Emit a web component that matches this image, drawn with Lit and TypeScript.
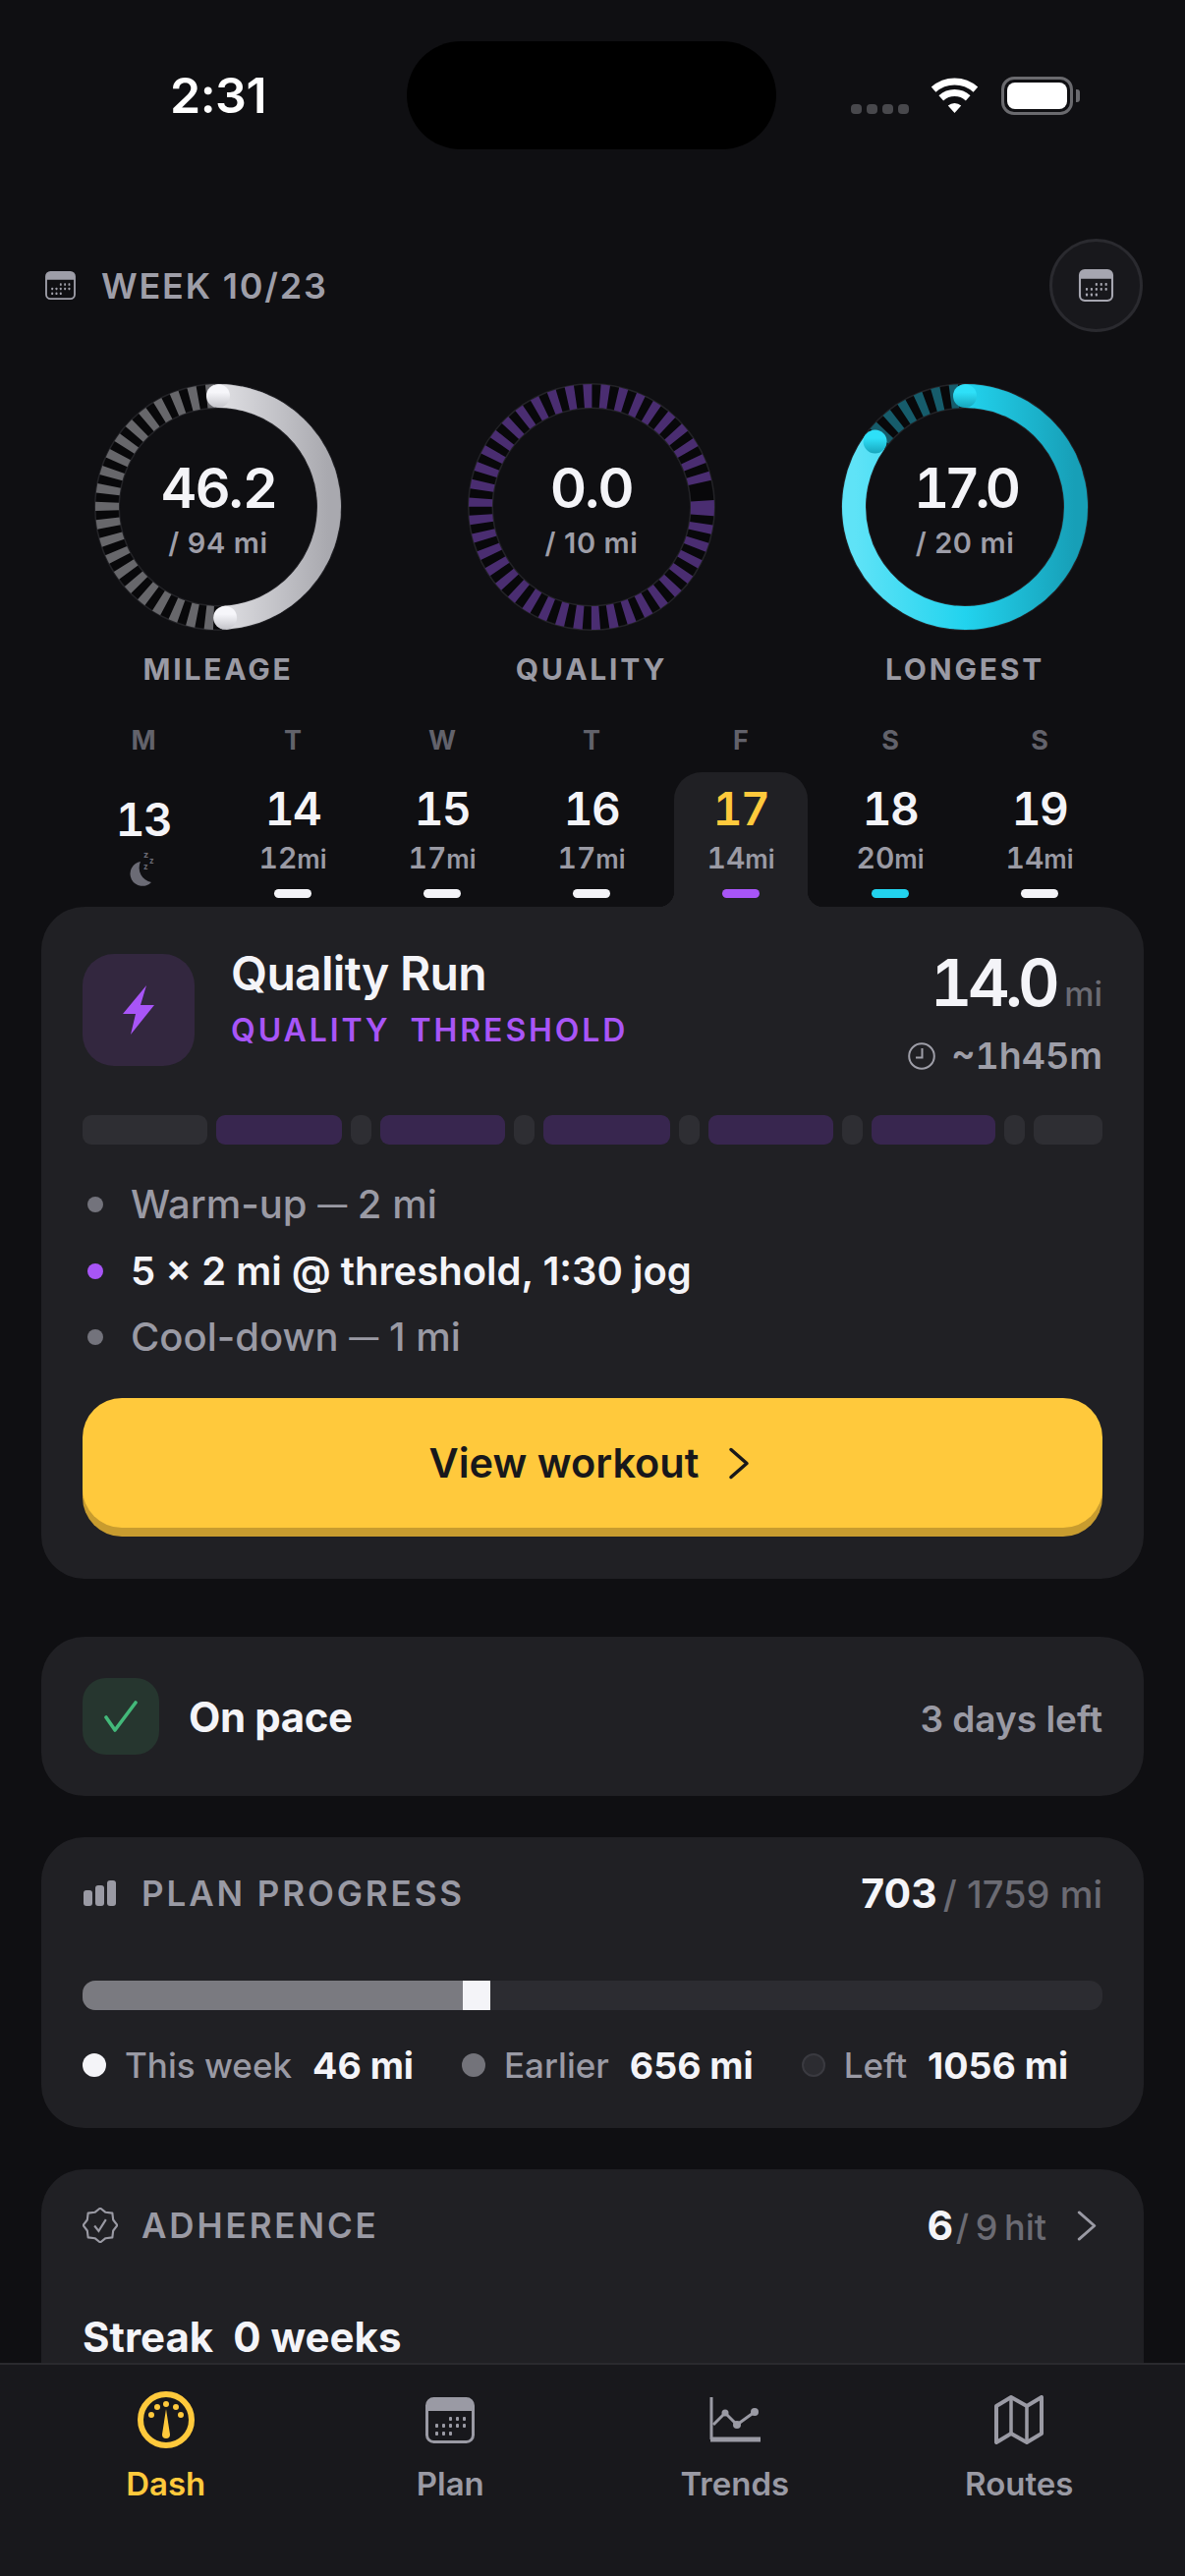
import { LitElement, html, css, svg } from "lit";
import { customElement } from "lit/decorators.js";

const calendar = (w: number, h: number) => html`<svg width=${w} height=${h} viewBox="0 0 50 47" fill="none">
  <rect x="1.5" y="1.5" width="47" height="44" rx="7" stroke="currentColor" stroke-width="3"/>
  <path d="M1.5 14V8.5a7 7 0 0 1 7-7h33a7 7 0 0 1 7 7V14Z" fill="currentColor"/>
  ${[[24, 20], [31, 20], [38, 20], [10, 27], [17, 27], [24, 27], [31, 27], [38, 27], [10, 35], [17, 35], [24, 35]].map(
    ([x, y]) => svg`<rect x=${x} y=${y} width="3" height="4" rx="1" fill="currentColor"/>`
  )}
</svg>`;

const chevron = (w: number, h: number, sw: number) => html`<svg width=${w} height=${h} viewBox="0 0 22 32" fill="none">
  <path d="M3 2L19 16L3 30" stroke="currentColor" stroke-width=${sw} stroke-linecap="round" stroke-linejoin="round"/>
</svg>`;

const sealPoints = () => {
  const pts: string[] = [];
  for (let i = 0; i < 16; i++) {
    const a = (i / 16) * Math.PI * 2 - Math.PI / 2;
    const r = i % 2 === 0 ? 16.5 : 13.5;
    pts.push(`${(17 + r * Math.cos(a)).toFixed(2)},${(17 + r * Math.sin(a)).toFixed(2)}`);
  }
  return pts.join(" ");
};

interface Ring { value: string; sub: string; label: string; frac: number; base: string; light: string; dark: string; tick: string; shift: number; capTop: string; capBot: string; }

const R = 113;
const TICKS = Array(41).fill("8.5 8.4").join(" ") + " 0 10 7 0";

const rings: Ring[] = [
  { value: "46.2", sub: "/ 94 mi", label: "MILEAGE", frac: 0.49, base: "#e0e0e4", light: "#f4f4f8", dark: "#a9a9af", tick: "#67676b", shift: 13, capTop: "#f6f6fa", capBot: "#c4c4ca" },
  { value: "0.0", sub: "/ 10 mi", label: "QUALITY", frac: 0, base: "#a855f7", light: "#a855f7", dark: "#a855f7", tick: "#4a2d71", shift: 0, capTop: "#a855f7", capBot: "#a855f7" },
  { value: "17.0", sub: "/ 20 mi", label: "LONGEST", frac: 0.85, base: "#22d3ee", light: "#5fe3f7", dark: "#179fb7", tick: "#165c6b", shift: 10, capTop: "#2ee0f8", capBot: "#17a5bc" },
];

const days = [
  { d: "M", n: "13", rest: true },
  { d: "T", n: "14", mi: "12", bar: "#f4f4f8" },
  { d: "W", n: "15", mi: "17", bar: "#f4f4f8" },
  { d: "T", n: "16", mi: "17", bar: "#f4f4f8" },
  { d: "F", n: "17", mi: "14", bar: "#a855f7", active: true },
  { d: "S", n: "18", mi: "20", bar: "#22d3ee" },
  { d: "S", n: "19", mi: "14", bar: "#f4f4f8" },
];

const segments = [
  { w: 127, q: false }, { w: 128, q: true }, { w: 21, q: false }, { w: 127, q: true }, { w: 21, q: false },
  { w: 128, q: true }, { w: 21, q: false }, { w: 127, q: true }, { w: 21, q: false }, { w: 126, q: true },
  { w: 21, q: false }, { w: 70, q: false },
];

@customElement("app-root")
export class AppRoot extends LitElement {
  static styles = css`
    :host { display: block; position: relative; width: 1206px; height: 2622px; overflow: hidden; background: #0f0f12; color: #f4f4f8; font-family: Inter, "Noto Sans", sans-serif; }
    svg { display: block; }
    .status { position: relative; height: 194px; display: flex; align-items: center; justify-content: space-between; padding: 0 114px 0 173px; }
    .time { font-size: 50px; line-height: 60px; font-weight: 600; letter-spacing: -0.5px; color: #fff; }
    .island { position: absolute; left: 414px; top: 42px; width: 376px; height: 110px; border-radius: 55px; background: #000; }
    .sys { display: flex; align-items: center; gap: 22px; }
    .dots { display: flex; gap: 5px; align-self: flex-end; padding-bottom: 1px; margin-right: -1px; }
    .dots i { width: 11px; height: 10px; border-radius: 4px; background: #48484c; }
    .batt { position: relative; width: 73px; height: 39px; box-sizing: border-box; border: 3px solid #6a6a6e; border-radius: 13px; padding: 3px; }
    .batt i { display: block; height: 100%; border-radius: 8px; background: #fff; }
    .batt b { position: absolute; right: -10px; top: 10px; width: 4px; height: 13px; border-radius: 0 3px 3px 0; background: #6a6a6e; }
    .hdr { margin-top: 49px; height: 95px; padding: 0 43px 0 46px; display: flex; align-items: center; justify-content: space-between; }
    .wk { display: flex; align-items: center; gap: 26px; font-size: 36px; line-height: 44px; font-weight: 600; letter-spacing: 1.8px; color: #9e9ea8; }
    .round { width: 95px; height: 95px; box-sizing: border-box; border-radius: 50%; background: #18181c; border: 3px solid #2a2a2f; display: flex; align-items: center; justify-content: center; color: #a6a6b0; }
    .rings { margin-top: 50px; padding-left: 94px; display: flex; gap: 124px; }
    .ring { width: 256px; display: flex; flex-direction: column; align-items: center; }
    .dial { position: relative; width: 256px; height: 256px; }
    .mid { position: absolute; inset: 0; display: flex; flex-direction: column; align-items: center; }
    .val { margin-top: 75px; font-size: 56px; line-height: 68px; font-weight: 600; letter-spacing: -1.6px; }
    .val.tn { font-variant-numeric: tabular-nums; letter-spacing: -4.9px; }
    .sub { margin-top: 4px; font-size: 29px; line-height: 36px; font-weight: 600; letter-spacing: 0.6px; color: #9e9ea8; }
    .rlabel { margin-top: 19px; font-size: 30px; line-height: 36px; font-weight: 700; letter-spacing: 2.8px; color: #9a9aa4; }
    .wd { margin-top: 39px; padding: 0 80px 0 78px; display: grid; grid-template-columns: repeat(7, 136px); column-gap: 16px; text-align: center; font-size: 27px; line-height: 32px; font-weight: 700; color: #62626b; }
    .daysr { margin-top: 16px; padding: 0 80px 0 78px; display: grid; grid-template-columns: repeat(7, 136px); column-gap: 16px; }
    .day { position: relative; height: 137px; box-sizing: border-box; padding-top: 14px; display: flex; flex-direction: column; align-items: center; border-radius: 28px 28px 0 0; }
    .day.rest { padding-top: 25px; }
    .day.on { background: #202024; }
    .day.on::before, .day.on::after { content: ""; position: absolute; bottom: 0; width: 16px; height: 16px; }
    .day.on::before { left: -16px; background: radial-gradient(circle at 0 0, transparent 16px, #202024 16.5px); }
    .day.on::after { right: -16px; background: radial-gradient(circle at 100% 0, transparent 16px, #202024 16.5px); }
    .num { font-size: 46px; line-height: 46px; font-weight: 600; color: #f4f4f8; letter-spacing: -1.5px; font-variant-numeric: tabular-nums; }
    .on .num { color: #ffc93c; }
    .mi { margin-top: 9px; font-size: 30px; line-height: 36px; font-weight: 600; color: #9a9aa4; font-variant-numeric: tabular-nums; }
    .mi small { font-size: 26px; font-weight: 600; }
    .bar { margin-top: 12px; width: 38px; height: 9px; border-radius: 4.5px; }
    .moon { margin-top: 5px; color: #6b6b75; }
    .card { margin: 0 42px; box-sizing: border-box; background: #202024; border-radius: 44px; padding: 0 42px; }
    .today { padding-top: 48px; padding-bottom: 52px; }
    .thead { display: flex; height: 114px; }
    .ticon { width: 114px; height: 114px; border-radius: 32px; background: #33273f; display: flex; align-items: center; justify-content: center; }
    .ttext { margin-left: 37px; flex: 1; }
    .ttitle { font-size: 48px; line-height: 56px; font-weight: 600; letter-spacing: -0.7px; color: #f4f4f8; margin-top: -8px; }
    .ttags { margin-top: 10px; display: flex; gap: 20px; font-size: 32px; line-height: 40px; font-weight: 600; letter-spacing: 2.9px; color: #a855f7; }
    .tright { display: flex; flex-direction: column; align-items: flex-end; }
    .dist { display: flex; align-items: baseline; gap: 9px; font-size: 66px; line-height: 70px; font-weight: 600; letter-spacing: -4.6px; margin-top: -6px; font-variant-numeric: tabular-nums; }
    .dist small { font-size: 34px; font-weight: 500; letter-spacing: 0; color: #6b6b73; }
    .dur { margin-top: 6px; display: flex; align-items: center; gap: 16px; font-size: 37.5px; line-height: 44px; font-weight: 600; color: #9e9ea8; font-variant-numeric: tabular-nums; }
    .segs { margin-top: 50px; display: flex; gap: 9px; }
    .seg { height: 30px; border-radius: 9px; background: #2e2e33; flex-shrink: 1; min-width: 0; }
    .seg.q { background: #38264f; }
    .steps { margin-top: 39px; display: flex; flex-direction: column; gap: 23.5px; }
    .step { display: flex; align-items: center; gap: 28px; padding-left: 5px; font-size: 40px; line-height: 44px; font-weight: 500; color: #9a9aa4; }
    .step i { width: 16px; height: 16px; border-radius: 50%; background: #73737c; }
    .step.main { color: #f4f4f8; font-weight: 600; }
    .step.main i { background: #a855f7; }
    .dash { font-size: 30px; vertical-align: 3px; }
    .cta { margin-top: 40px; height: 132px; box-sizing: border-box; padding-right: 6px; border-radius: 40px; background: #ffc93c; box-shadow: 0 9px 0 #c89c2f; display: flex; align-items: center; justify-content: center; gap: 30px; font-size: 41.5px; font-weight: 600; color: #18181b; }
    .pace { margin-top: 59px; height: 162px; display: flex; align-items: center; }
    .ok { width: 78px; height: 78px; border-radius: 24px; background: #26362f; display: flex; align-items: center; justify-content: center; }
    .paceT { margin-left: 30px; flex: 1; font-size: 42px; font-weight: 700; letter-spacing: -0.4px; }
    .paceR { font-size: 37px; font-weight: 600; color: #9a9aa4; padding-top: 5px; }
    .plan { margin-top: 42px; padding-top: 34px; padding-bottom: 42px; }
    .phead { height: 46px; display: flex; align-items: center; color: #9a9aa4; }
    .ptitle { margin-left: 24px; flex: 1; font-size: 35px; font-weight: 600; letter-spacing: 2.9px; white-space: nowrap; }
    .pval { font-size: 38px; font-weight: 500; color: #6b6b73; white-space: nowrap; }
    .pval.hit { font-size: 36px; word-spacing: -3px; }
    .pval b { font-size: 41px; font-weight: 700; color: #f4f4f8; margin-right: -4px; }
    .pbar { margin-top: 66px; height: 30px; border-radius: 13px; background: #2c2c31; display: flex; overflow: hidden; }
    .pbar i { display: block; height: 100%; }
    .legend { margin-top: 34px; height: 44px; display: flex; align-items: center; font-size: 35px; font-weight: 500; color: #9a9aa4; white-space: nowrap; }
    .lg { display: flex; align-items: center; margin-right: 49px; flex-shrink: 0; }
    .lg i { width: 24px; height: 24px; box-sizing: border-box; border-radius: 50%; margin-right: 19px; }
    .lg b { margin-left: 21px; font-size: 37.5px; font-weight: 700; color: #f4f4f8; }
    .adh { margin-top: 42px; padding-top: 34px; height: 400px; }
    .streak { margin-top: 66px; font-size: 42px; line-height: 50px; font-weight: 700; color: #f4f4f8; }
    .streak span { margin-left: 20px; }
    .tabs { position: absolute; left: 0; right: 0; top: 2405px; bottom: 0; box-sizing: border-box; border-top: 2px solid #2a2a2e; background: #18181c; padding: 24px 24px 0; display: grid; grid-template-columns: repeat(4, 1fr); }
    .tab { display: flex; flex-direction: column; align-items: center; font-size: 33px; font-weight: 600; color: #9a9aa4; }
    .tab.on { color: #ffc93c; }
    .tabi { height: 64px; display: flex; align-items: center; justify-content: center; }
    .tab span { margin-top: 13px; line-height: 40px; }
  `;

  private renderRing(r: Ring, i: number) {
    const c = 128;
    const a = r.frac * Math.PI * 2 - Math.PI / 2;
    const ex = c + R * Math.cos(a);
    const ey = c + R * Math.sin(a);
    return html`<div class="ring">
      <div class="dial">
        <svg width="256" height="256" viewBox="0 0 256 256" fill="none">
          <defs>
            <linearGradient id="g${i}" gradientUnits="userSpaceOnUse" x1="16" y1="128" x2="240" y2="128">
              <stop offset="0" stop-color=${r.light}/><stop offset="0.5" stop-color=${r.base}/><stop offset="1" stop-color=${r.dark}/>
            </linearGradient>
            <linearGradient id="c${i}" x1="0" y1="0" x2="0" y2="1">
              <stop offset="0.35" stop-color=${r.capTop}/><stop offset="1" stop-color=${r.capBot}/>
            </linearGradient>
          </defs>
          <circle cx=${c} cy=${c} r=${R} stroke="#232327" stroke-width="26"/>
          <circle cx=${c} cy=${c} r=${R} stroke="#08080a" stroke-width="23"/>
          <circle cx=${c} cy=${c} r=${R} stroke=${r.tick} stroke-width="24" stroke-dasharray=${TICKS} stroke-dashoffset=${-r.shift}/>
          ${r.frac > 0
            ? svg`<path d="M${c} ${c - R}A${R} ${R} 0 ${r.frac > 0.5 ? 1 : 0} 1 ${ex} ${ey}" stroke="url(#g${i})" stroke-width="24"/>
                 <circle cx=${c} cy=${c - R} r="12" fill="url(#c${i})"/>
                 <circle cx=${ex} cy=${ey} r="12" fill="url(#c${i})"/>`
            : ""}
        </svg>
        <div class="mid"><div class="val ${r.value.startsWith("1") ? "tn" : ""}">${r.value}</div><div class="sub">${r.sub}</div></div>
      </div>
      <div class="rlabel">${r.label}</div>
    </div>`;
  }

  render() {
    return html`
      <div class="status">
        <div class="time">2:31</div>
        <div class="island"></div>
        <div class="sys">
          <div class="dots"><i></i><i></i><i></i><i></i></div>
          <svg width="51" height="37" viewBox="0 0 51 37" fill="none">
            <path d="M4.1 12.2A32 32 0 0 1 46.9 12.2" stroke="#fff" stroke-width="7"/>
            <path d="M11.8 20.8A20.5 20.5 0 0 1 39.2 20.8" stroke="#fff" stroke-width="7"/>
            <path d="M25.5 36L18.8 28.6A10 10 0 0 1 32.2 28.6Z" fill="#fff"/>
          </svg>
          <div class="batt"><i></i><b></b></div>
        </div>
      </div>

      <div class="hdr">
        <div class="wk">${calendar(31, 29)}<span>WEEK 10/23</span></div>
        <div class="round">${calendar(37, 33)}</div>
      </div>

      <div class="rings">${rings.map((r, i) => this.renderRing(r, i))}</div>

      <div class="wd">${days.map((d) => html`<div>${d.d}</div>`)}</div>
      <div class="daysr">
        ${days.map((d) => html`<div class="day ${d.active ? "on" : ""} ${d.rest ? "rest" : ""}">
          <div class="num">${d.n}</div>
          ${d.rest
            ? html`<svg class="moon" width="34" height="40" viewBox="0 0 34 40" fill="none">
                <path d="M14 15A12.5 12.5 0 1 0 25 36A15 15 0 0 1 14 15Z" fill="currentColor"/>
                <text x="17" y="11" font-size="9" font-weight="700" fill="currentColor" font-family="Inter, sans-serif">z</text>
                <text x="23" y="17" font-size="8" font-weight="700" fill="currentColor" font-family="Inter, sans-serif">z</text>
                <text x="17" y="23" font-size="8" font-weight="700" fill="currentColor" font-family="Inter, sans-serif">z</text>
              </svg>`
            : html`<div class="mi">${d.mi}<small>mi</small></div><div class="bar" style="background:${d.bar}"></div>`}
        </div>`)}
      </div>

      <div class="card today">
        <div class="thead">
          <div class="ticon">
            <svg width="32" height="50" viewBox="0 0 32 50"><path d="M24 0L0 29H13L8 50L32 20H18Z" fill="#a855f7"/></svg>
          </div>
          <div class="ttext">
            <div class="ttitle">Quality Run</div>
            <div class="ttags"><span>QUALITY</span><span>THRESHOLD</span></div>
          </div>
          <div class="tright">
            <div class="dist">14.0<small>mi</small></div>
            <div class="dur">
              <svg width="28" height="28" viewBox="0 0 28 28" fill="none"><circle cx="14" cy="14" r="12.8" stroke="#9e9ea8" stroke-width="2"/><path d="M14.5 6V15.5H8" stroke="#9e9ea8" stroke-width="2"/></svg>
              <span>~1h45m</span>
            </div>
          </div>
        </div>
        <div class="segs">${segments.map((s) => html`<div class="seg ${s.q ? "q" : ""}" style="flex:${s.w} ${s.w} 0"></div>`)}</div>
        <div class="steps">
          <div class="step"><i></i><span>Warm-up <span class="dash">—</span> 2 mi</span></div>
          <div class="step main"><i></i><span>5 × 2 mi @ threshold, 1:30 jog</span></div>
          <div class="step"><i></i><span>Cool-down <span class="dash">—</span> 1 mi</span></div>
        </div>
        <div class="cta"><span>View workout</span>${chevron(22, 33, 3.5)}</div>
      </div>

      <div class="card pace">
        <div class="ok"><svg width="34" height="32" viewBox="0 0 34 32" fill="none"><path d="M2 17L11 30L32 2" stroke="#43b97a" stroke-width="3.6" stroke-linecap="round" stroke-linejoin="round"/></svg></div>
        <div class="paceT">On pace</div>
        <div class="paceR">3 days left</div>
      </div>

      <div class="card plan">
        <div class="phead">
          <svg width="36" height="26" viewBox="0 0 36 26"><rect x="1" y="10" width="9" height="16" rx="3" fill="currentColor"/><rect x="13" y="5" width="9" height="21" rx="3" fill="currentColor"/><rect x="25" y="0" width="9" height="26" rx="3" fill="currentColor"/></svg>
          <div class="ptitle">PLAN PROGRESS</div>
          <div class="pval"><b>703</b> / 1759 mi</div>
        </div>
        <div class="pbar">
          <i style="width:387px;background:#7a7a80"></i><i style="width:28px;background:#f4f4f8"></i>
        </div>
        <div class="legend">
          <div class="lg"><i style="background:#f4f4f8"></i>This week<b>46 mi</b></div>
          <div class="lg"><i style="background:#73737a"></i>Earlier<b>656 mi</b></div>
          <div class="lg"><i style="background:#2c2c31;border:2px solid #3a3a40"></i>Left<b>1056 mi</b></div>
        </div>
      </div>

      <div class="card adh">
        <div class="phead">
          <svg width="36" height="36" viewBox="0 0 34 34" fill="none">
            <polygon points=${sealPoints()} stroke="currentColor" stroke-width="2" stroke-linejoin="round"/>
            <path d="M11.5 17.5L15.5 22.5L22.5 11.5" stroke="currentColor" stroke-width="2"/>
          </svg>
          <div class="ptitle">ADHERENCE</div>
          <div class="pval hit"><b>6</b> / 9 hit</div>
          <div style="margin-left:30px;margin-right:5px">${chevron(22, 31, 3)}</div>
        </div>
        <div class="streak">Streak<span>0 weeks</span></div>
      </div>

      <div class="tabs">
        <div class="tab on">
          <div class="tabi"><svg width="58" height="58" viewBox="0 0 58 58" fill="none">
            <circle cx="29" cy="29" r="26" stroke="currentColor" stroke-width="6"/>
            <path d="M29 18L33 44A4 4 0 0 1 25 44Z" fill="currentColor"/>
            ${[[14, 24], [20, 16], [29, 13], [39, 16], [44, 24]].map(([x, y]) => svg`<circle cx=${x} cy=${y} r="3" fill="currentColor"/>`)}
          </svg></div><span>Dash</span>
        </div>
        <div class="tab">
          <div class="tabi">${calendar(50, 47)}</div><span>Plan</span>
        </div>
        <div class="tab">
          <div class="tabi"><svg width="52" height="46" viewBox="0 0 52 46" fill="none">
            <path d="M2 0V43" stroke="currentColor" stroke-width="3"/><path d="M1 43H52" stroke="currentColor" stroke-width="5"/>
            <path d="M4 28L16 16L28 28L46 15" stroke="currentColor" stroke-width="3"/>
            <circle cx="16" cy="16" r="3.5" fill="currentColor"/><circle cx="28" cy="28" r="4" fill="currentColor"/><circle cx="46" cy="15" r="4" fill="currentColor"/>
          </svg></div><span>Trends</span>
        </div>
        <div class="tab">
          <div class="tabi"><svg width="50" height="50" viewBox="0 0 50 50" fill="none">
            <path d="M2 11L17 2L33 11L48 2V39L33 48L17 39L2 48Z" stroke="currentColor" stroke-width="4" stroke-linejoin="round"/>
            <path d="M17 3V39M33 11V47" stroke="currentColor" stroke-width="3.5"/>
          </svg></div><span>Routes</span>
        </div>
      </div>
    `;
  }
}
